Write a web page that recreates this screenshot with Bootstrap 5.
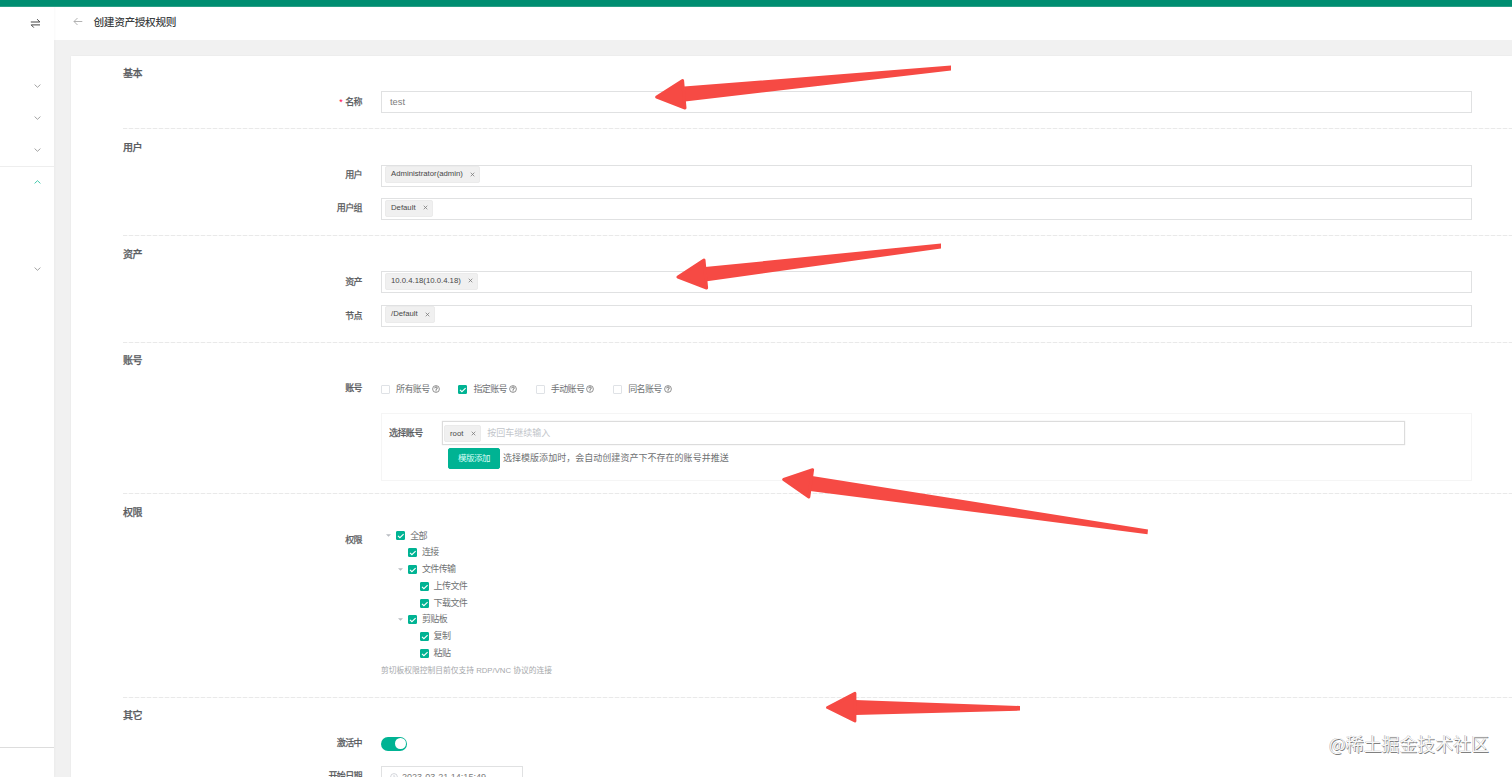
<!DOCTYPE html>
<html lang="zh-CN">
<head>
<meta charset="utf-8">
<meta name="viewport" content="width=device-width, initial-scale=1">
<title>创建资产授权规则</title>
<link href="https://cdn.jsdelivr.net/npm/bootstrap@5.3.0/dist/css/bootstrap.min.css" rel="stylesheet">
<style>
  :root { --jms: #00b393; --line: #e0e1e2; --ink: #5a5c5f; }
  body { font-family: "Liberation Sans", "Noto Sans CJK SC", sans-serif; font-size: 9px; line-height: 1.2; color: #707274; background: #f1f1f1; }
  .app { height: 777px; }
  .topbar { height: 7px; background: #008e71; border-bottom: 1px solid #2a9f87; }
  .side { width: 54px; box-shadow: 0 0 3px rgba(0,0,0,.05); z-index: 1; }
  .side-top { height: 63px; padding: 11px 13.5px 0 0; }
  .side-item { height: 32px; padding-right: 13px; color: #999; }
  .side-rule { border-top: 1px solid #eee; }
  .side-item.side-open { height: 30px; color: #2fc4a4; }
  .side-gap { height: 56px; }
  .side-foot { height: 30px; border-top: 1px solid #ddd; }
  .page-head { height: 33px; padding-left: 18.5px; gap: 11px; }
  .page-head svg { margin-top: -4px; }
  .page-head h1 { font-size: 10.7px; letter-spacing: -.37px; color: #3c3f42; margin: 0; line-height: 14px; padding-bottom: 3px; }
  .sheet { margin: 16px 0 0 17px; padding-left: 52px; box-shadow: 0 0 2px rgba(0,0,0,.05); }
  .sect { padding-top: 8px; background-image: repeating-linear-gradient(90deg, #e9e9e9 0 4px, #f8f8f8 4px 6px); background-size: 100% 1px; background-position: bottom; background-repeat: no-repeat; }
  .sect h2 { font-size: 10px; letter-spacing: -.5px; font-weight: 500; color: var(--ink); line-height: 20px; margin: 0 0 7px; -webkit-text-stroke: .25px var(--ink); }
  .s1 { height: 73px; } .s2, .s3 { height: 107px; } .s4 { height: 151px; } .s5 { height: 204px; }
  .s2, .s3 { padding-top: 8.5px; }
  .s3 h2 { margin-bottom: 6.5px; }
  .s5 { padding-top: 9px; }
  .field { margin-bottom: 11.5px; }
  .lab { flex: 0 0 258px; text-align: right; padding-right: 19px; line-height: 22px; }
  .s2 .lab { line-height: 21px; }
  .lab, .lab-in { font-size: 9px; letter-spacing: -.6px; color: #55575a; -webkit-text-stroke: .25px #55575a; }
  .req { color: #f04; margin-right: 3px; -webkit-text-stroke: 0; }
  .box { height: 22px; width: 1091px; border: 1px solid var(--line); border-radius: 0; padding: 0 8px; font-size: 9.3px; color: #7d7d7d; }
  .s1 .box { padding-top: 1px; }
  .tags { padding: 0 3px; }
  .chip { height: 17px; margin-top: -2px; background: #f0f0f0; border: 1px solid #ebebeb; border-radius: 2px; padding: 0 4px 1px 5px; font-size: 7.75px; color: #484848; gap: 7.5px; white-space: nowrap; }
  .chip svg { width: 5px; height: 5px; }
  .cb { width: 9px; height: 9px; border: 1px solid #dfe2e6; border-radius: 1px; flex: none; display: flex; }
  .cb.on { background: var(--jms); border-color: var(--jms); }
  .opts { padding-top: 10px; }
  .opts .lab { line-height: 15px; }
  .opt { width: 77.4px; height: 15px; font-size: 9px; letter-spacing: -.6px; padding-top: 1px; }
  .opt .cb { margin-right: 6px; }
  .opt svg.q { width: 8px; height: 8px; margin: -1px 0 0 2px; }
  .panel { width: 1091px; height: 68px; margin: 17px 0 0 258px; border: 1px solid #f5f5f5; padding: 7px 0 0 7px; }
  .lab-in { width: 53px; line-height: 24px; }
  .box-in { width: 963px; height: 24px; border: 1px solid #dcdcdc; box-shadow: 0 0 1px #ddd; padding: 0 1px; font-size: 9px; color: #c2c5ca; }
  .box-in .chip { margin: 1px 6.5px 0 0; padding-bottom: 0; }
  .btn-jms { --bs-btn-bg: var(--jms); --bs-btn-border-color: var(--jms); --bs-btn-color: #d9fff7; --bs-btn-padding-y: 0; --bs-btn-padding-x: 0; --bs-btn-border-radius: 2px; --bs-btn-font-size: 8.5px; width: 52px; height: 21px; line-height: 17px; letter-spacing: -.5px; }
  .note-row { margin: 3px 0 0 59px; gap: 3px; }
  .note-row span { letter-spacing: .03px; }
  .tree { padding-top: 4.5px; }
  .tree .lab { line-height: 18px; padding-top: 3.5px; }
  .tree-row { height: 16.8px; font-size: 9px; letter-spacing: -.6px; }
  .tree-row .cb { margin-right: 5px; }
  .caret { width: 15.2px; padding-left: 5px; line-height: 0; flex: none; }
  .lv1 { padding-left: 11.7px; } .lv2 { padding-left: 23.4px; }
  .hint { font-size: 7.75px; color: #a6a8ab; margin-top: 4.5px; letter-spacing: 0; }
  .toggle { width: 26px; height: 14px; border-radius: 7px; background: var(--jms); padding: 0 1.5px; }
  .knob { width: 10.5px; height: 11px; border-radius: 50%; background: #fff; }
  .s6 .lab { line-height: 21px; }
  .s6 .field { margin-bottom: 12px; }
  .date { width: 142px; font-size: 9.05px; }
  .overlay { position: absolute; inset: 0; pointer-events: none; z-index: 5; }
  .wm { position: absolute; right: 23px; bottom: 22px; z-index: 6; font: 17.9px/24px "Noto Sans CJK SC", sans-serif; color: #f8f8f8; text-shadow: .7px .7px .6px #808080, -.4px -.4px .5px #aaa; }
</style>
</head>
<body>
<svg width="0" height="0" class="position-absolute">
  <symbol id="dn" viewBox="0 0 7 4"><path d="M.6.6 3.5 3.3 6.4.6" fill="none" stroke="currentColor" stroke-width=".9"/></symbol>
  <symbol id="x" viewBox="0 0 5 5"><path d="M.7.7 4.3 4.3M4.3.7.7 4.3" stroke="#777" stroke-width=".75"/></symbol>
  <symbol id="ck" viewBox="0 0 7 7"><path d="M1 3.8 2.9 5.7 6.6 2.1" fill="none" stroke="#fff" stroke-width="1.1"/></symbol>
  <symbol id="q" viewBox="0 0 8 8"><circle cx="4" cy="4" r="3.4" fill="none" stroke="#777" stroke-width=".8"/><path d="M2.7 3.3C2.7 1.6 5.4 1.7 5.3 3.1 5.2 3.9 4 3.9 4 4.9M4 5.4v.9" fill="none" stroke="#555" stroke-width=".9"/></symbol>
  <symbol id="tri" viewBox="0 0 5 3"><path d="M0 .2h5L2.5 2.8z" fill="#b9bcc2"/></symbol>
</svg>

<div class="app d-flex flex-column overflow-hidden position-relative">
  <div class="topbar flex-shrink-0"></div>
  <div class="d-flex flex-grow-1 overflow-hidden">
    <aside class="side bg-white d-flex flex-column flex-shrink-0 position-relative">
      <div class="side-top d-flex justify-content-end">
        <svg width="11" height="11" viewBox="0 0 11 11" fill="none" stroke="#444" stroke-width="1"><path d="M.8 4H9.8L7.2 1.2M10 6.9H1.2L3.8 9.6"/></svg>
      </div>
      <div class="side-item d-flex align-items-center justify-content-end"><svg width="7" height="4"><use href="#dn"/></svg></div>
      <div class="side-item d-flex align-items-center justify-content-end"><svg width="7" height="4"><use href="#dn"/></svg></div>
      <div class="side-item d-flex align-items-center justify-content-end"><svg width="7" height="4"><use href="#dn"/></svg></div>
      <div class="side-rule"></div>
      <div class="side-item side-open d-flex align-items-center justify-content-end"><svg width="7" height="4" viewBox="0 0 7 4"><path d="M.6 3.4 3.5.7 6.4 3.4" fill="none" stroke="#2fc4a4" stroke-width=".9"/></svg></div>
      <div class="side-gap"></div>
      <div class="side-item d-flex align-items-center justify-content-end"><svg width="7" height="4"><use href="#dn"/></svg></div>
      <div class="side-foot mt-auto"></div>
    </aside>

    <main class="flex-grow-1 overflow-hidden">
      <header class="page-head bg-white d-flex align-items-center">
        <svg width="10" height="9" viewBox="0 0 10 9" fill="none" stroke="#aaa" stroke-width=".9"><path d="M9.3 4.5H1M4.5 1 1 4.5 4.5 8"/></svg>
        <h1>创建资产授权规则</h1>
      </header>

      <form class="sheet bg-white">
        <section class="sect s1">
          <h2>基本</h2>
          <div class="field d-flex"><div class="lab"><span class="req">*</span>名称</div><div class="box d-flex align-items-center">test</div></div>
        </section>

        <section class="sect s2">
          <h2>用户</h2>
          <div class="field d-flex"><div class="lab">用户</div><div class="box tags d-flex align-items-center"><span class="chip d-flex align-items-center">Administrator(admin)<svg><use href="#x"/></svg></span></div></div>
          <div class="field d-flex"><div class="lab">用户组</div><div class="box tags d-flex align-items-center"><span class="chip d-flex align-items-center">Default<svg><use href="#x"/></svg></span></div></div>
        </section>

        <section class="sect s3">
          <h2>资产</h2>
          <div class="field d-flex"><div class="lab">资产</div><div class="box tags d-flex align-items-center"><span class="chip d-flex align-items-center">10.0.4.18(10.0.4.18)<svg><use href="#x"/></svg></span></div></div>
          <div class="field d-flex"><div class="lab">节点</div><div class="box tags d-flex align-items-center"><span class="chip d-flex align-items-center">/Default<svg><use href="#x"/></svg></span></div></div>
        </section>

        <section class="sect s4">
          <h2 class="mb-0">账号</h2>
          <div class="opts d-flex">
            <div class="lab">账号</div>
            <div class="opt d-flex align-items-center"><span class="cb"></span>所有账号<svg class="q"><use href="#q"/></svg></div>
            <div class="opt d-flex align-items-center"><span class="cb on"><svg width="7" height="7"><use href="#ck"/></svg></span>指定账号<svg class="q"><use href="#q"/></svg></div>
            <div class="opt d-flex align-items-center"><span class="cb"></span>手动账号<svg class="q"><use href="#q"/></svg></div>
            <div class="opt d-flex align-items-center"><span class="cb"></span>同名账号<svg class="q"><use href="#q"/></svg></div>
          </div>
          <div class="panel">
            <div class="d-flex"><div class="lab-in">选择账号</div>
              <div class="box-in d-flex align-items-center"><span class="chip d-flex align-items-center">root<svg><use href="#x"/></svg></span>按回车继续输入</div></div>
            <div class="note-row d-flex align-items-center"><button type="button" class="btn btn-jms">模版添加</button><span>选择模版添加时，会自动创建资产下不存在的账号并推送</span></div>
          </div>
        </section>

        <section class="sect s5">
          <h2 class="mb-0">权限</h2>
          <div class="tree d-flex">
            <div class="lab">权限</div>
            <div>
              <div class="tree-row d-flex align-items-center"><span class="caret"><svg width="5" height="3"><use href="#tri"/></svg></span><span class="cb on"><svg width="7" height="7"><use href="#ck"/></svg></span>全部</div>
              <div class="tree-row lv1 d-flex align-items-center"><span class="caret"></span><span class="cb on"><svg width="7" height="7"><use href="#ck"/></svg></span>连接</div>
              <div class="tree-row lv1 d-flex align-items-center"><span class="caret"><svg width="5" height="3"><use href="#tri"/></svg></span><span class="cb on"><svg width="7" height="7"><use href="#ck"/></svg></span>文件传输</div>
              <div class="tree-row lv2 d-flex align-items-center"><span class="caret"></span><span class="cb on"><svg width="7" height="7"><use href="#ck"/></svg></span>上传文件</div>
              <div class="tree-row lv2 d-flex align-items-center"><span class="caret"></span><span class="cb on"><svg width="7" height="7"><use href="#ck"/></svg></span>下载文件</div>
              <div class="tree-row lv1 d-flex align-items-center"><span class="caret"><svg width="5" height="3"><use href="#tri"/></svg></span><span class="cb on"><svg width="7" height="7"><use href="#ck"/></svg></span>剪贴板</div>
              <div class="tree-row lv2 d-flex align-items-center"><span class="caret"></span><span class="cb on"><svg width="7" height="7"><use href="#ck"/></svg></span>复制</div>
              <div class="tree-row lv2 d-flex align-items-center"><span class="caret"></span><span class="cb on"><svg width="7" height="7"><use href="#ck"/></svg></span>粘贴</div>
              <div class="hint">剪切板权限控制目前仅支持 RDP/VNC 协议的连接</div>
            </div>
          </div>
        </section>

        <section class="sect s6">
          <h2>其它</h2>
          <div class="field d-flex align-items-center"><div class="lab">激活中</div><div class="toggle d-flex align-items-center justify-content-end"><span class="knob"></span></div></div>
          <div class="field d-flex"><div class="lab">开始日期</div><div class="box date d-flex align-items-center"><svg class="me-1" width="8" height="8" viewBox="0 0 8 8" fill="none" stroke="#c0c4cc" stroke-width=".7"><circle cx="4" cy="4" r="3.4"/><path d="M4 2v2.2h1.6"/></svg>2023-03-21 14:15:49</div></div>
        </section>
      </form>
    </main>
  </div>

  <svg class="overlay" width="1512" height="777" fill="#f64a44" stroke="#f64a44" stroke-width="3" stroke-linejoin="round">
    <path stroke="none" d="M684 86.6 951 65.5V70.5L685 101.4zM705 267 941 243.5V248.5L707 281.2zM812 476 1148 529.5 1147.5 534.2 810 491zM855 700 1020 706V710.6L855 715z"/>
    <path d="M656.7 97 682.6 80.6 685 108zM678 277 704 260 706.6 288zM783.7 479.5 812.6 469.7 808.8 497zM827.6 707.5 854.9 693.4V721z"/>
  </svg>
  <div class="wm">@稀土掘金技术社区</div>
</div>
<script src="https://cdn.jsdelivr.net/npm/bootstrap@5.3.0/dist/js/bootstrap.bundle.min.js"></script>
</body>
</html>
